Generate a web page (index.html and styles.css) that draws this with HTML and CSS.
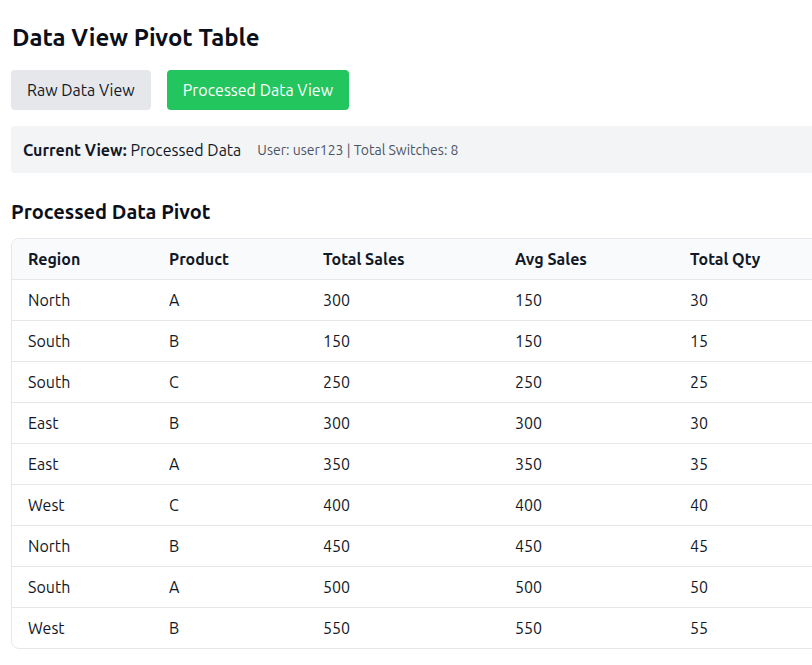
FILE: index.html
```html
<!DOCTYPE html>
<html>
<head>
<meta charset="utf-8">
<link rel="stylesheet" href="styles.css">
</head>
<body>
<div class="app">
  <h1 class="title">Data View Pivot Table</h1>
  <div class="toolbar">
    <button class="btn btn-raw">Raw Data View</button>
    <button class="btn btn-active">Processed Data View</button>
  </div>
  <div class="status">
    <span class="status-main"><strong>Current View:</strong> Processed Data</span>
    <span class="status-meta">User: user123 | Total Switches: 8</span>
  </div>
  <h2 class="subtitle">Processed Data Pivot</h2>
  <div class="table-wrap">
    <table class="pivot">
      <colgroup>
        <col class="c1"><col class="c2"><col class="c3"><col class="c4"><col class="c5">
      </colgroup>
      <thead>
        <tr><th>Region</th><th>Product</th><th>Total Sales</th><th>Avg Sales</th><th>Total Qty</th></tr>
      </thead>
      <tbody>
        <tr><td>North</td><td>A</td><td>300</td><td>150</td><td>30</td></tr>
        <tr><td>South</td><td>B</td><td>150</td><td>150</td><td>15</td></tr>
        <tr><td>South</td><td>C</td><td>250</td><td>250</td><td>25</td></tr>
        <tr><td>East</td><td>B</td><td>300</td><td>300</td><td>30</td></tr>
        <tr><td>East</td><td>A</td><td>350</td><td>350</td><td>35</td></tr>
        <tr><td>West</td><td>C</td><td>400</td><td>400</td><td>40</td></tr>
        <tr><td>North</td><td>B</td><td>450</td><td>450</td><td>45</td></tr>
        <tr><td>South</td><td>A</td><td>500</td><td>500</td><td>50</td></tr>
        <tr><td>West</td><td>B</td><td>550</td><td>550</td><td>55</td></tr>
      </tbody>
    </table>
  </div>
</div>
</body>
</html>
```
FILE: styles.css
```css
html, body {
  margin: 0;
  padding: 0;
  background: #ffffff;
}
body {
  font-family: Ubuntu, "Noto Sans", "Open Sans", sans-serif;
  color: #111827;
  overflow: hidden;
}
.app {
  padding: 20px 11px;
  width: 1000px;
}
.title {
  font-size: 24px;
  font-weight: 700;
  line-height: 36px;
  margin: 0 0 14px 1px;
  color: #0b0f19;
}
.toolbar {
  display: flex;
  gap: 16px;
  margin-bottom: 16px;
}
.btn {
  font-family: inherit;
  font-size: 16px;
  height: 40px;
  padding: 0 16px;
  border: none;
  border-radius: 4px;
  cursor: pointer;
}
.btn-raw {
  background: #e5e7eb;
  color: #111827;
}
.btn-active {
  background: #22c55e;
  color: #ffffff;
}
.status {
  background: #f3f4f6;
  border-radius: 4px;
  height: 47px;
  padding: 0 12px;
  display: flex;
  align-items: center;
  gap: 16px;
  margin-bottom: 24px;
}
.status-main {
  font-size: 16px;
  color: #111827;
}
.status-meta {
  font-size: 14px;
  color: #4b5563;
}
.subtitle {
  font-size: 20px;
  font-weight: 700;
  line-height: 30px;
  margin: 0 0 11px 0;
  color: #0b0f19;
}
.table-wrap {
  border: 1px solid #e5e7eb;
  border-radius: 8px;
  overflow: hidden;
}
.pivot {
  width: 100%;
  border-collapse: collapse;
  table-layout: fixed;
  font-size: 16px;
}
.c1 { width: 141px; }
.c2 { width: 154px; }
.c3 { width: 192px; }
.c4 { width: 175px; }
.pivot th, .pivot td {
  text-align: left;
  padding: 0 16px;
  height: 40px;
}
.pivot th {
  background: #f9fafb;
  font-weight: 700;
  color: #111827;
  border-bottom: 1px solid #e5e7eb;
}
.pivot td {
  border-bottom: 1px solid #e5e7eb;
  color: #111827;
}
.pivot tbody tr:last-child td {
  border-bottom: none;
}
```
